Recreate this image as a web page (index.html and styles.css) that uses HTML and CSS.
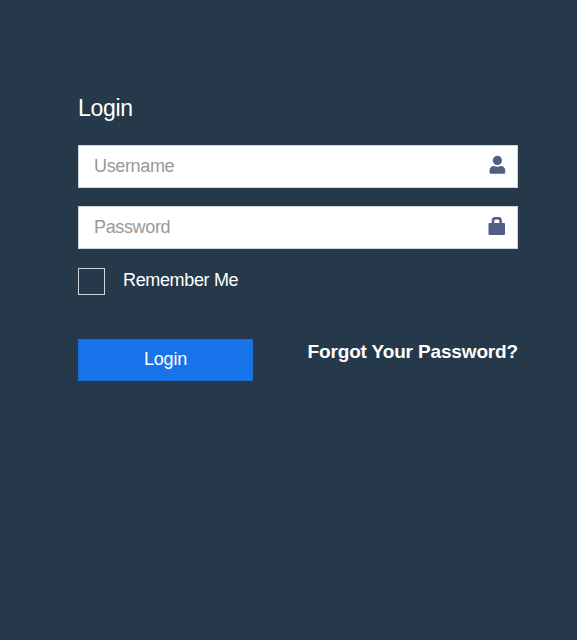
FILE: index.html
```
<!DOCTYPE html>
<html lang="en">
<head>
<meta charset="utf-8">
<title>Login</title>
<link rel="stylesheet" href="styles.css">
</head>
<body>
<form class="login">
  <h1 class="title">Login</h1>
  <div class="field">
    <input class="input" type="text" placeholder="Username" aria-label="Username">
    <svg class="icon" viewBox="0 0 18 20"><circle cx="9.400" cy="5.400" r="4.600"/><path d="M1.500 18.800V15.700C1.500 12.900 3.300 11 6 11Q9.400 12.300 12.800 11C15.500 11 17.300 12.900 17.300 15.700V17.300Q17.300 18.800 15.800 18.800H3Q1.500 18.800 1.500 17.300Z"/></svg>
  </div>
  <div class="field">
    <input class="input" type="password" placeholder="Password" aria-label="Password">
    <svg class="icon" viewBox="0 0 18 20"><path fill-rule="evenodd" d="M3.700 7V4.500Q3.700 1 7 1H10.600Q13.900 1 13.900 4.500V7H16Q17 7 17 8.200V17.800Q17 19 16 19H1.500Q.5 19 .5 17.800V8.200Q.5 7 1.500 7ZM6.200 7H11.400V5Q11.400 3.500 10 3.500H7.600Q6.200 3.500 6.200 5Z"/></svg>
  </div>
  <label class="remember"><input class="check" type="checkbox"><span>Remember Me</span></label>
  <div class="actions">
    <button class="submit" type="button">Login</button>
    <a class="forgot">Forgot Your Password?</a>
  </div>
</form>
</body>
</html>
```
FILE: styles.css
```
* { box-sizing: border-box; }
body {
  margin: 0;
  min-height: 640px;
  background: #25394a;
  color: #fff;
  font-family: "Liberation Sans", Arial, sans-serif;
  font-size: 18px;
}
.login { width: 440px; margin-left: 78px; padding-top: 94px; }
.title { margin: 0 0 23px; font-size: 23px; line-height: 28px; font-weight: 400; letter-spacing: -0.3px; }
.field { position: relative; height: 43px; margin-bottom: 18px; }
.input {
  display: block;
  width: 100%;
  height: 43px;
  padding: 0 40px 0 15px;
  border: 1px solid #ced4da;
  border-radius: 0;
  background: #fff;
  font: inherit;
  letter-spacing: -0.35px;
}
.input::placeholder { color: #999; opacity: 1; }
.icon { position: absolute; top: 10px; right: 12px; width: 18px; height: 20px; fill: #505f83; }
.remember { display: flex; align-items: center; gap: 18px; height: 28px; letter-spacing: -0.35px; }
.remember span { padding-bottom: 1px; }
.check { appearance: none; width: 27px; height: 27px; margin: 0; border: 1px solid #ced4da; }
.actions { display: flex; justify-content: space-between; margin-top: 44px; }
.submit {
  width: 175px;
  height: 42px;
  padding: 0 0 2px;
  border: 1px solid #1a6edb;
  background: #1773ea;
  color: #fff;
  font: inherit;
  letter-spacing: -0.2px;
}
.forgot { font-size: 19px; font-weight: 700; line-height: 25px; letter-spacing: -0.15px; white-space: nowrap; }
```
